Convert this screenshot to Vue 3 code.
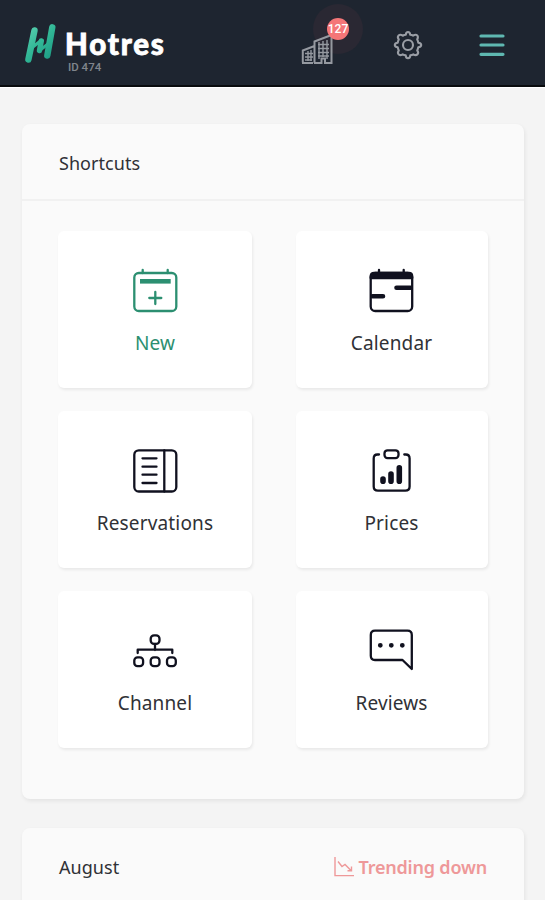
<script setup>
const shortcuts = [
  { key: 'new', label: 'New', active: true },
  { key: 'calendar', label: 'Calendar' },
  { key: 'reservations', label: 'Reservations' },
  { key: 'prices', label: 'Prices' },
  { key: 'channel', label: 'Channel' },
  { key: 'reviews', label: 'Reviews' }
];

const notifications = 127;
const hotelId = 474;
</script>

<template>
  <div class="page">
    <header class="topbar">
      <div class="brand">
        <svg class="brand-mark" width="34" height="42" viewBox="0 0 34 42">
          <defs>
            <linearGradient id="mark" gradientUnits="userSpaceOnUse" x1="2" y1="6" x2="32" y2="34">
              <stop offset="0" stop-color="#5bd0b0" />
              <stop offset="0.5" stop-color="#31b796" />
              <stop offset="1" stop-color="#1b9a83" />
            </linearGradient>
          </defs>
          <g fill="none" stroke="url(#mark)" stroke-linecap="round" stroke-linejoin="round">
            <path stroke-width="6.4" d="M11.5 7.5 5.4 36.5M29.3 4.3 24.3 32.5" />
            <path stroke-width="5.4" d="M18.3 18 16.5 27.5" />
            <path stroke-width="3" d="M10.5 23.5 18 17.5M16.5 27.5 25 21" />
          </g>
        </svg>
        <div class="brand-text">
          <div class="brand-name">Hotres</div>
          <div class="brand-id">ID {{ hotelId }}</div>
        </div>
      </div>

      <nav class="actions">
        <button type="button" class="action action--hotel">
          <span class="halo"></span>
          <svg width="34" height="34" viewBox="0 0 34 34" fill="none" stroke="#9599a0" stroke-width="2">
            <path d="M1.8 32.5V20.5L13.5 16M13.5 33V11.5L30.5 5V32.5M1 33H12M13 33H20.5V28.5H24V33H31.5" />
            <path stroke-width="1.4" d="M4 23.5H12M4 27H12M4 30H11M7 21V31M10 20V31M17 14.5H28M17 18.5H28M17 22.5H28M17 26H28M18 12V29M22 11V27M26 10V29" />
          </svg>
          <span class="badge">{{ notifications }}</span>
        </button>
        <button type="button" class="action action--settings">
          <svg width="30" height="30" viewBox="0 0 30 30" fill="none" stroke="#9a9ea5" stroke-width="2.1" stroke-linejoin="round">
            <path d="M12.8 4.8Q13 2 15 2T17.2 4.8Q18.7 5 20 5.7Q22.8 3.9 24.2 5.4T24.2 9.6Q25 11 25.3 12.7Q28.2 13 28.2 15T25.3 17.3Q25 19 24.2 20.4Q26 23 24.4 24.4T20.3 24.3Q19 25 17.3 25.3Q17 28.2 15 28.2T12.7 25.3Q11 25 9.7 24.3Q7 26 5.6 24.4T5.8 20.4Q5 19 4.7 17.3Q1.8 17 1.8 15T4.7 12.7Q5 11 5.8 9.6Q4 7 5.6 5.5T9.8 5.7Q11.2 5 12.8 4.8Z" />
            <circle cx="15" cy="15" r="5" />
          </svg>
        </button>
        <button type="button" class="action action--menu">
          <svg width="26" height="24" viewBox="0 0 26 24" stroke="#5fb8b1" stroke-width="3.2" stroke-linecap="round">
            <path d="M2 3H24M2 12H24M2 21.3H24" />
          </svg>
        </button>
      </nav>
    </header>

    <main class="content">
      <section class="card card--shortcuts">
        <div class="card-header">
          <h2 class="card-title">Shortcuts</h2>
        </div>
        <div class="tiles">
          <button
            v-for="item in shortcuts"
            :key="item.key"
            type="button"
            class="tile"
            :class="{ 'tile--active': item.active }"
          >
            <svg class="tile-icon" width="48" height="48" viewBox="0 0 48 48">
              <template v-if="item.key === 'new'">
                <rect x="3.3" y="6" width="42" height="38" rx="4.5" />
                <path d="M11.7 3V6M36.7 3V6" />
                <path stroke-width="4.6" stroke-linecap="butt" d="M9 14.3H39.7" />
                <path d="M24.3 25V37M18.3 31H30.3" />
              </template>
              <template v-else-if="item.key === 'calendar'">
                <rect x="2.7" y="6" width="41.5" height="38" rx="4.5" />
                <path d="M11 3V6M35.7 3V6" />
                <path class="solid" d="M2.7 11V9Q3 6 6 6H41Q44 6 44.2 9V11Z" />
                <path stroke-width="4.6" d="M28.5 20.7H42.5M4.5 29.3H15" />
              </template>
              <template v-else-if="item.key === 'reservations'">
                <rect x="3.3" y="3.3" width="42" height="41.2" rx="4.5" />
                <path d="M33.3 3.3V44.5M11.5 11.3H25.5M11.5 19.7H25.5M11.5 27.7H25.5M11.5 36H25.5" />
              </template>
              <template v-else-if="item.key === 'prices'">
                <path d="M11 7.5H9.5Q5.7 7.5 5.7 11.5V39.5Q5.7 43.7 10 43.7H37.3Q41.6 43.7 41.6 39.5V11.5Q41.6 7.5 37.8 7.5H36.3" />
                <rect x="16.5" y="3.3" width="14" height="7.8" rx="3" />
                <path stroke-width="5.6" d="M15 32V34.3M23 27V34.3M31.3 20.8V34.3" />
              </template>
              <template v-else-if="item.key === 'channel'">
                <rect x="19.7" y="8.3" width="8.8" height="8.6" rx="3.4" />
                <path d="M24 17V23M6.7 26V22.7H41.3V26" />
                <rect x="3.3" y="30.3" width="8.8" height="8.8" rx="3.2" />
                <rect x="19.7" y="30.3" width="8.8" height="8.8" rx="3.2" />
                <rect x="36" y="30.3" width="8.8" height="8.8" rx="3.2" />
              </template>
              <template v-else>
                <path d="M7 3.6H39.5Q43.8 3.6 43.8 8V42L34.5 33H7Q2.8 33 2.8 28.7V8Q2.8 3.6 7 3.6Z" />
                <path stroke-width="4.8" d="M12.3 18.3h.01M23.3 18.3h.01M34.3 18.3h.01" />
              </template>
            </svg>
            <span class="tile-label">{{ item.label }}</span>
          </button>
        </div>
      </section>

      <section class="card card--month">
        <div class="card-header">
          <h2 class="card-title">August</h2>
          <div class="trend">
            <svg width="20" height="20" viewBox="0 0 20 20" fill="none" stroke="#ee9899" stroke-width="1.4">
              <path d="M1 0V18.6H20" />
              <path d="M4 4.5 8 9.5 11 7.5 17 13.5M13.5 13.7H17.5V9.5" />
            </svg>
            <span>Trending down</span>
          </div>
        </div>
      </section>
    </main>
  </div>
</template>

<style>
body {
  margin: 0;
  background: #f4f4f4;
}
</style>

<style scoped>
.page {
  height: 900px;
  overflow: hidden;
  background: #f4f4f4;
  color: #303136;
  font-family: "Noto Sans", "Open Sans", sans-serif;
}

button {
  border: 0;
  padding: 0;
  background: none;
  font: inherit;
  color: inherit;
  cursor: pointer;
}

svg {
  display: block;
}

.topbar {
  box-sizing: border-box;
  height: 87px;
  padding: 0 40px 0 23px;
  display: flex;
  align-items: flex-start;
  justify-content: space-between;
  background: #1e2530;
  border-bottom: 2px solid #090b0e;
  box-shadow: 0 1px 0 #fff;
}

.brand {
  display: flex;
  padding-top: 23px;
}

.brand-text {
  padding: 5px 0 0 8px;
}

.brand-name {
  font-family: Lato, "Noto Sans", sans-serif;
  font-size: 29.5px;
  font-weight: 900;
  line-height: 32px;
  letter-spacing: 1.8px;
  color: #fff;
  -webkit-text-stroke: 0.8px #fff;
}

.brand-id {
  padding-left: 3px;
  font-family: Roboto, "Noto Sans", sans-serif;
  font-size: 11.5px;
  font-weight: 500;
  line-height: 15px;
  color: #80858d;
}

.actions {
  display: flex;
  align-items: flex-start;
}

.action {
  position: relative;
}

.action--hotel {
  margin: 30px 58px 0 0;
}

.action--settings {
  margin: 30px 56px 0 0;
}

.action--menu {
  margin-top: 33px;
}

.action--hotel svg {
  position: relative;
}

.halo {
  position: absolute;
  left: 12px;
  top: -26px;
  width: 50px;
  height: 50px;
  border-radius: 50%;
  background: #2a2833;
}

.badge {
  position: absolute;
  left: 26px;
  top: -12px;
  width: 22px;
  height: 22px;
  border-radius: 50%;
  background: #f47678;
  color: #fff;
  font-family: Roboto, sans-serif;
  font-size: 12px;
  font-weight: 500;
  line-height: 22px;
  text-align: center;
}

.content {
  padding: 37px 21px 0 22px;
}

.card {
  background: #fafafa;
  border-radius: 8px;
  box-shadow: 1px 2px 4px rgba(0, 0, 0, 0.07);
}

.card--shortcuts {
  height: 675px;
  margin-bottom: 29px;
}

.card--month {
  height: 200px;
}

.card-header {
  box-sizing: border-box;
  height: 77px;
  padding: 2px 37px 0;
  display: flex;
  align-items: center;
  justify-content: space-between;
  border-bottom: 2px solid #f1f1f1;
}

.card-title {
  margin: 0;
  font-size: 18px;
  font-weight: 400;
  letter-spacing: 0.05px;
}

.trend {
  display: flex;
  align-items: center;
  gap: 5px;
  font-size: 18px;
  font-weight: 600;
  letter-spacing: -0.2px;
  color: #ee9899;
}

.tiles {
  display: grid;
  grid-template-columns: 194px 192px;
  grid-auto-rows: 157px;
  gap: 23px 44px;
  padding: 30px 36px 0;
}

.tile {
  display: flex;
  flex-direction: column;
  align-items: center;
  padding-top: 36px;
  border-radius: 6px;
  background: #fff;
  box-shadow: 1px 2px 3px rgba(0, 0, 0, 0.07);
}

.tile-icon {
  fill: none;
  stroke: #10111f;
  stroke-width: 2.3;
  stroke-linecap: round;
  stroke-linejoin: round;
}

.tile-icon .solid {
  fill: #10111f;
}

.tile-label {
  margin-top: 16px;
  font-size: 19px;
  line-height: 24px;
  letter-spacing: 0.15px;
}

.tile:nth-child(even) .tile-label {
  padding-right: 1px;
}

.tile--active {
  color: #2c8f71;
}

.tile--active .tile-icon {
  stroke: #2c8f71;
}
</style>
